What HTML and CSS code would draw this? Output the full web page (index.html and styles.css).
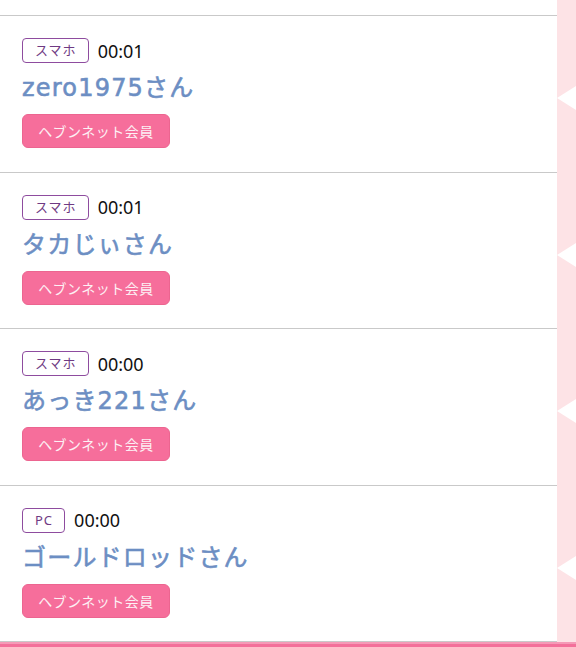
FILE: index.html
```html
<!DOCTYPE html>
<html>
<head>
    <meta charset="utf-8">
    <title>足あと</title>
    <link rel="stylesheet" href="styles.css">
</head>
<body>

    <div class="page">
        <div class="row row-top">
            <div class="row-main"></div>
            <div class="row-side"></div>
        </div>

        <div class="row">
            <div class="row-main">
                <div class="visit-head">
                    <span class="device">スマホ</span>
                    <span class="time">00:01</span>
                </div>
                <div class="visitor-name">zero1975さん</div>
                <button class="member-btn">ヘブンネット会員</button>
            </div>
            <div class="row-side"><span class="arrow"></span></div>
        </div>

        <div class="row">
            <div class="row-main">
                <div class="visit-head">
                    <span class="device">スマホ</span>
                    <span class="time">00:01</span>
                </div>
                <div class="visitor-name">タカじぃさん</div>
                <button class="member-btn">ヘブンネット会員</button>
            </div>
            <div class="row-side"><span class="arrow"></span></div>
        </div>

        <div class="row">
            <div class="row-main">
                <div class="visit-head">
                    <span class="device">スマホ</span>
                    <span class="time">00:00</span>
                </div>
                <div class="visitor-name">あっき221さん</div>
                <button class="member-btn">ヘブンネット会員</button>
            </div>
            <div class="row-side"><span class="arrow"></span></div>
        </div>

        <div class="row">
            <div class="row-main">
                <div class="visit-head">
                    <span class="device">PC</span>
                    <span class="time">00:00</span>
                </div>
                <div class="visitor-name">ゴールドロッドさん</div>
                <button class="member-btn">ヘブンネット会員</button>
            </div>
            <div class="row-side"><span class="arrow"></span></div>
        </div>

        <div class="bottom-bar"></div>
    </div>

</body>
</html>
```

FILE: styles.css
```css
/* Page */
body {
    margin: 0;
    background: #fff;
    font-family: "Noto Sans", "Noto Sans CJK JP", sans-serif;
    color: #111;
}

.page {
    width: 576px;
    height: 647px;
    overflow: hidden;
}

/* One visitor row: list cell + pink side strip */
.row {
    display: grid;
    grid-template-columns: 557px 19px;
}

.row-main {
    padding: 22px 22px 23.6px;
    border-bottom: 1px solid #c9c9c9;
}

.row-top .row-main {
    height: 15px;
    padding: 0;
}

.row-side {
    background: #fde3e6;
    display: flex;
    align-items: center;
}

.arrow {
    width: 0;
    height: 0;
    margin-top: 8px;
    border-top: 12px solid transparent;
    border-bottom: 12px solid transparent;
    border-right: 19px solid #fff;
}

/* Device badge + time */
.visit-head {
    display: flex;
    align-items: center;
    gap: 9px;
    height: 25px;
}

.device {
    box-sizing: border-box;
    height: 25px;
    line-height: 23px;
    padding: 0 11px 0 12px;
    border: 1px solid #8e4c9f;
    border-radius: 4px;
    font-size: 13px;
    letter-spacing: 1px;
    color: #6f3a83;
}

.time {
    font-size: 18px;
    color: #111;
}

/* Name */
.visitor-name {
    height: 51px;
    line-height: 51px;
    font-family: "DejaVu Sans", "Noto Sans CJK JP", sans-serif;
    font-size: 24px;
    letter-spacing: 1.2px;
    color: #6c8ec3;
    -webkit-text-stroke: 0.6px #6c8ec3;
}

/* Pink member button */
.member-btn {
    display: block;
    width: 148px;
    height: 34px;
    padding: 0;
    border: 1px solid #ec6590;
    border-radius: 6px;
    background: #f66e9b;
    color: #fdf0f4;
    font-family: "Noto Sans CJK JP", sans-serif;
    font-size: 14px;
    letter-spacing: 0.5px;
}

.bottom-bar {
    height: 8px;
    border-top: 2px solid #f59ab7;
    background: #f3709a;
}
```
